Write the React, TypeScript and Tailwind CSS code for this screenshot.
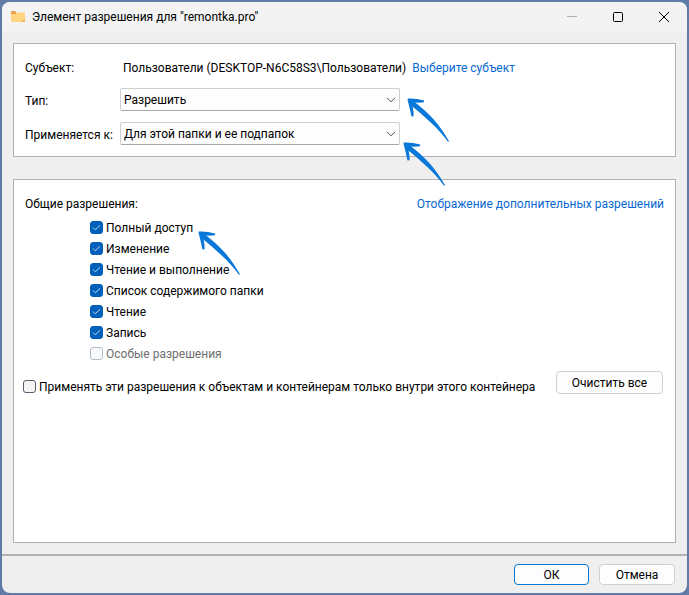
import { useState } from "react";
import type { ReactNode } from "react";

function FolderIcon() {
  return (
    <svg width="16" height="14" viewBox="0 0 16 14" aria-hidden="true">
      <path d="M1 1.500a.5.5 0 0 1 .5-.5h3.600l1.700 2v2H1z" fill="#efa044" />
      <path d="M1 4h5.500L8 2.500h6.500a.5.5 0 0 1 .5.5v8.500a.5.5 0 0 1-.5.5h-13a.5.5 0 0 1-.5-.5z" fill="#ffd581" />
      <path d="M15 8.500V11.500a.5.5 0 0 1-.5.5H11z" fill="#f6b458" />
    </svg>
  );
}

function Arrow({ className }: { className: string }) {
  return (
    <svg
      className={`pointer-events-none absolute ${className}`}
      width="44"
      height="46"
      viewBox="0 0 44 46"
      fill="#0a78d8"
      aria-hidden="true"
    >
      <path d="M.8 .8L6 2.800C13 8 20.500 14.500 27 21.700C33 28.500 37.800 36 42 43.300L41 43.700C36 37 30.500 30.800 24 24.800C17 18.200 10 12.200 3.400 7Z" />
      <path d="M.6 .6C6 .2 11.500 1.200 17.200 2.600L17 4.300C12 5 7 4.600 2 3.800Z" />
      <path d="M.4 1.200L4 2.600C5.600 8 6.900 13 6.600 18.300L4.500 18.500C3.400 13 2 7.500 .4 1.200Z" />
    </svg>
  );
}

function Choice({ id, label, options, children }: { id: string; label: string; options: string[]; children: ReactNode }) {
  return (
    <div className="flex items-center">
      <label htmlFor={id} className="w-[95px] shrink-0 whitespace-nowrap pt-0.5">
        {label}
      </label>
      <div className="relative w-[280px]">
        <select
          id={id}
          className="block h-[23px] w-full appearance-none rounded-xs border border-[#d0d0d0] border-b-[#a8a8a8] bg-[#fdfdfd] px-[3px] leading-4"
        >
          {options.map((option) => (
            <option key={option}>{option}</option>
          ))}
        </select>
        <svg
          className="pointer-events-none absolute top-2 right-1"
          width="10"
          height="8"
          viewBox="0 0 10 8"
          fill="none"
          stroke="#4a4a55"
          aria-hidden="true"
        >
          <path d="M1 1.800l4 4 4-4" />
        </svg>
        {children}
      </div>
    </div>
  );
}

function Check({
  label,
  initial = false,
  disabled = false,
  children,
}: {
  label: string;
  initial?: boolean;
  disabled?: boolean;
  children?: ReactNode;
}) {
  const [checked, setChecked] = useState(initial);
  return (
    <label
      className={`relative flex h-[21px] w-max items-center gap-[3px] ${disabled ? "text-[#6d6d6d]" : ""}`}
    >
      <span className="grid">
        <input
          type="checkbox"
          checked={checked}
          disabled={disabled}
          onChange={(event) => setChecked(event.target.checked)}
          className="col-start-1 row-start-1 size-[13px] appearance-none rounded-[3px] border border-[#5a5a68] bg-[#f5f5f5] checked:border-[#005fb8] checked:bg-[#005fb8] disabled:border-[#b8bcc0] disabled:bg-[#f7fafd]"
        />
        {checked && (
          <svg
            className="pointer-events-none col-start-1 row-start-1"
            width="13"
            height="13"
            viewBox="0 0 13 13"
            fill="none"
            stroke="#b8dcf8"
            aria-hidden="true"
          >
            <path d="M3 6.500l2.300 2.300 4.700-4.500" />
          </svg>
        )}
      </span>
      {label}
      {children}
    </label>
  );
}

const permissions = ["Изменение", "Чтение и выполнение", "Список содержимого папки", "Чтение", "Запись"];

export default function App() {
  return (
    <div className="flex min-h-screen flex-col bg-[#5f7ba6] p-0.5 font-[Roboto,'Noto_Sans',sans-serif] text-xs leading-4 text-black">
      <main className="flex grow flex-col overflow-hidden rounded-lg bg-[#efefef]">
        <header className="flex h-[30px] items-center bg-[#f3f3f3] pl-2">
          <FolderIcon />
          <h1 className="grow pl-[6px]">Элемент разрешения для "remontka.pro"</h1>
          <button type="button" disabled aria-label="Свернуть" className="grid h-7 w-[46px] place-items-center text-[#b0b0b0]">
            <svg width="12" height="12" viewBox="0 0 12 12" stroke="currentColor">
              <path d="M1 5.500h10" />
            </svg>
          </button>
          <button type="button" aria-label="Развернуть" className="grid h-7 w-[46px] place-items-center">
            <svg width="12" height="12" viewBox="0 0 12 12" fill="none" stroke="currentColor">
              <rect x="1.500" y="1.500" width="9" height="9" rx="1" />
            </svg>
          </button>
          <button type="button" aria-label="Закрыть" className="grid h-7 w-[46px] place-items-center">
            <svg width="12" height="12" viewBox="0 0 12 12" fill="none" stroke="currentColor">
              <path d="M1 1l10 10M11 1L1 11" />
            </svg>
          </button>
        </header>

        <section className="mx-[11px] mt-[11px] border border-[#b0b0b0] bg-white px-[11px] pt-4 pb-[11px]">
          <div className="mb-3 flex">
            <span className="w-[98px] shrink-0">Субъект:</span>
            <span>Пользователи (DESKTOP-N6C58S3\Пользователи)</span>
            <a href="#subject" className="ml-1.5 text-[#0868d2]">
              Выберите субъект
            </a>
          </div>
          <div className="flex flex-col gap-[11px]">
            <Choice id="type" label="Тип:" options={["Разрешить", "Запретить"]}>
              <Arrow className="top-[10px] left-[287px]" />
            </Choice>
            <Choice id="scope" label="Применяется к:" options={["Для этой папки и ее подпапок", "Только для этой папки"]}>
              <Arrow className="top-5 left-[283px]" />
            </Choice>
          </div>
        </section>

        <section className="mx-[11px] mt-[22px] mb-[11px] grow border border-[#b0b0b0] bg-white px-[11px] pt-4">
          <div className="mb-[5px] flex justify-between">
            <h2>Общие разрешения:</h2>
            <a href="#advanced" className="text-[#0868d2]">
              Отображение дополнительных разрешений
            </a>
          </div>
          <div className="pl-[65px]">
            <Check label="Полный доступ" initial>
              <Arrow className="top-[14px] left-[108px]" />
            </Check>
            {permissions.map((name) => (
              <Check key={name} label={name} initial />
            ))}
            <Check label="Особые разрешения" disabled />
          </div>
          <div className="mt-[7px] flex items-start justify-between">
            <div className="-ml-0.5 pt-[5px]">
              <Check label="Применять эти разрешения к объектам и контейнерам только внутри этого контейнера" />
            </div>
            <button type="button" className="mr-px h-[23px] w-[107px] shrink-0 rounded border border-[#d0d0d0] bg-[#fdfdfd]">
              Очистить все
            </button>
          </div>
        </section>

        <footer className="flex h-[39px] justify-end gap-[10px] border-t-2 border-[#b3b3b3] px-3 pt-2">
          <button type="button" className="flex h-[21px] w-[75px] items-center justify-center rounded border border-[#0078d4] bg-[#fdfdfd]">
            ОК
          </button>
          <button type="button" className="flex h-[21px] w-[76px] items-center justify-center rounded border border-[#d0d0d0] bg-[#fdfdfd]">
            Отмена
          </button>
        </footer>
      </main>
    </div>
  );
}
